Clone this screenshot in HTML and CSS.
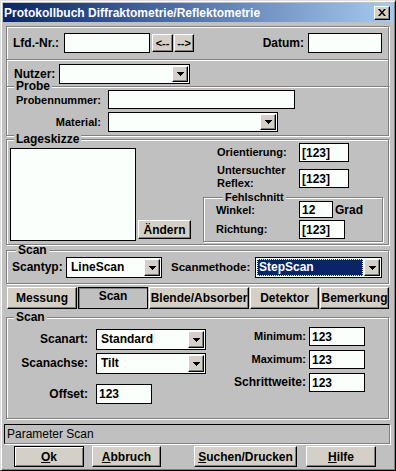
FILE: index.html
```html
<!DOCTYPE html>
<html lang="de">
<head>
    <meta charset="UTF-8">
    <meta name="viewport" content="width=device-width, initial-scale=1.0">
    <title>Protokollbuch Diffraktometrie/Reflektometrie</title>
    <link rel="stylesheet" href="styles.css">
</head>
<body>
    <div class="window">
        <div class="titlebar">
            <span class="title">Protokollbuch Diffraktometrie/Reflektometrie</span>
            <span class="close-btn">
                <svg width="8" height="7" viewBox="0 0 8 7"><path d="M0 0h2l2 2.4L6 0h2L5 3.5 8 7H6L4 4.6 2 7H0l3-3.5z"/></svg>
            </span>
        </div>

        <div class="client">
            <div class="box row-lfd">
                <span class="lbl lbl-lfd">Lfd.-Nr.:</span>
                <input type="text" class="edit w-lfd" readonly>
                <button class="btn nav">&lt;--</button>
                <button class="btn nav nav-next">--&gt;</button>
                <span class="fill"></span>
                <span class="lbl lbl-datum">Datum:</span>
                <input type="text" class="edit w-datum" readonly>
            </div>

            <div class="row-nutzer">
                <span class="lbl lbl-nutzer">Nutzer:</span>
                <div class="combo w-nutzer">
                    <span class="combo-text"></span>
                    <span class="drop"><svg width="7" height="4" viewBox="0 0 7 4"><path d="M0 0h7v1H0zM1 1h5v1H1zM2 2h3v1H2zM3 3h1v1H3z"/></svg></span>
                </div>
            </div>

            <fieldset class="group probe">
                <legend>Probe</legend>
                <div class="form-row">
                    <span class="lbl lbl-probe">Probennummer:</span>
                    <input type="text" class="edit w-probennr" readonly>
                </div>
                <div class="form-row">
                    <span class="lbl lbl-probe">Material:</span>
                    <div class="combo w-material">
                        <span class="combo-text"></span>
                        <span class="drop"><svg width="7" height="4" viewBox="0 0 7 4"><path d="M0 0h7v1H0zM1 1h5v1H1zM2 2h3v1H2zM3 3h1v1H3z"/></svg></span>
                    </div>
                </div>
            </fieldset>

            <fieldset class="group lage">
                <legend>Lageskizze</legend>
                <div class="lage-body">
                    <div class="sketch"></div>
                    <button class="btn btn-aendern">Ändern</button>
                    <div class="lage-right">
                        <div class="field-row">
                            <span class="lbl lbl-right">Orientierung:</span>
                            <input type="text" class="edit w-small" value="[123]" readonly>
                        </div>
                        <div class="field-row reflex-row">
                            <span class="lbl lbl-right lbl-two">Untersuchter<br>Reflex:</span>
                            <input type="text" class="edit w-small" value="[123]" readonly>
                        </div>
                        <fieldset class="group fehl">
                            <legend>Fehlschnitt</legend>
                            <div class="fehl-row">
                                <span class="lbl lbl-fehl">Winkel:</span>
                                <input type="text" class="edit w-winkel" value="12" readonly>
                                <span class="unit">Grad</span>
                            </div>
                            <div class="fehl-row richtung-row">
                                <span class="lbl lbl-fehl">Richtung:</span>
                                <input type="text" class="edit w-richtung" value="[123]" readonly>
                            </div>
                        </fieldset>
                    </div>
                </div>
            </fieldset>

            <fieldset class="group scan-top">
                <legend>Scan</legend>
                <div class="form-row">
                    <span class="lbl lbl-scantyp">Scantyp:</span>
                    <div class="combo w-scantyp">
                        <span class="combo-text">LineScan</span>
                        <span class="drop"><svg width="7" height="4" viewBox="0 0 7 4"><path d="M0 0h7v1H0zM1 1h5v1H1zM2 2h3v1H2zM3 3h1v1H3z"/></svg></span>
                    </div>
                    <span class="lbl lbl-methode">Scanmethode:</span>
                    <div class="combo w-methode">
                        <span class="combo-text selected">StepScan</span>
                        <span class="drop"><svg width="7" height="4" viewBox="0 0 7 4"><path d="M0 0h7v1H0zM1 1h5v1H1zM2 2h3v1H2zM3 3h1v1H3z"/></svg></span>
                    </div>
                </div>
            </fieldset>

            <div class="tabs">
                <button class="btn tab tab-messung">Messung</button>
                <button class="btn tab tab-scan active">Scan</button>
                <button class="btn tab tab-blende">Blende/Absorber</button>
                <button class="btn tab tab-detektor">Detektor</button>
                <button class="btn tab tab-bemerkung">Bemerkung</button>
            </div>

            <fieldset class="group scan-bottom">
                <legend>Scan</legend>
                <div class="scan-body">
                    <div class="scan-left">
                        <div class="form-row scanart-row">
                            <span class="lbl lbl-scan">Scanart:</span>
                            <div class="combo w-scanart">
                                <span class="combo-text">Standard</span>
                                <span class="drop"><svg width="7" height="4" viewBox="0 0 7 4"><path d="M0 0h7v1H0zM1 1h5v1H1zM2 2h3v1H2zM3 3h1v1H3z"/></svg></span>
                            </div>
                        </div>
                        <div class="form-row scanachse-row">
                            <span class="lbl lbl-scan">Scanachse:</span>
                            <div class="combo w-scanart">
                                <span class="combo-text">Tilt</span>
                                <span class="drop"><svg width="7" height="4" viewBox="0 0 7 4"><path d="M0 0h7v1H0zM1 1h5v1H1zM2 2h3v1H2zM3 3h1v1H3z"/></svg></span>
                            </div>
                        </div>
                        <div class="form-row offset-row">
                            <span class="lbl lbl-scan">Offset:</span>
                            <input type="text" class="edit w-num" value="123" readonly>
                        </div>
                    </div>
                    <div class="scan-right">
                        <div class="form-row">
                            <span class="lbl lbl-range">Minimum:</span>
                            <input type="text" class="edit w-num w-range" value="123" readonly>
                        </div>
                        <div class="form-row range-row">
                            <span class="lbl lbl-range">Maximum:</span>
                            <input type="text" class="edit w-num w-range" value="123" readonly>
                        </div>
                        <div class="form-row range-row">
                            <span class="lbl lbl-range lbl-wide">Schrittweite:</span>
                            <input type="text" class="edit w-num w-range" value="123" readonly>
                        </div>
                    </div>
                </div>
            </fieldset>

            <div class="status">Parameter Scan</div>

            <div class="actions">
                <button class="btn btn-default btn-ok"><u>O</u>k</button>
                <button class="btn btn-abbruch"><u>A</u>bbruch</button>
                <button class="btn btn-suchen"><u>S</u>uchen/Drucken</button>
                <button class="btn btn-hilfe"><u>H</u>ilfe</button>
            </div>
        </div>
    </div>
</body>
</html>
```

FILE: styles.css
```css
* {
    box-sizing: border-box;
}

body {
    margin: 0;
    background-color: #c0c0c0;
    color: #000;
    font-family: "Liberation Sans", Arial, sans-serif;
    font-size: 11px;
    font-weight: bold;
}

.window {
    width: 396px;
    height: 471px;
    padding: 2px;
    border: 1px solid;
    border-color: #dfdfdf #000 #000 #dfdfdf;
    box-shadow: inset 1px 1px #fff, inset -1px -1px #808080;
    background-color: #c0c0c0;
}

/* title bar */
.titlebar {
    display: flex;
    align-items: center;
    justify-content: space-between;
    height: 19px;
    padding: 0 3px 0 1px;
    background: linear-gradient(to right, #0a246a, #a6caf0);
    color: #fff;
    font-size: 12px;
}

.close-btn {
    display: flex;
    align-items: center;
    justify-content: center;
    width: 16px;
    height: 14px;
    background-color: #d4d0c8;
    border: 1px solid;
    border-color: #fff #000 #000 #fff;
    box-shadow: inset -1px -1px #808080;
}

.client {
    padding: 4px 4px 0 3px;
}

/* common controls */
.lbl {
    flex-shrink: 0;
    line-height: 20px;
    white-space: nowrap;
}

.edit {
    flex-shrink: 0;
    height: 20px;
    padding: 0 2px;
    border: 1px solid #000;
    background-color: #fbfffb;
    color: #000;
    font: inherit;
    font-size: 12px;
    outline: none;
}

.btn {
    flex-shrink: 0;
    padding: 0;
    background-color: #d4d0c8;
    border: 1px solid;
    border-color: #fff #000 #000 #fff;
    box-shadow: inset -1px -1px #808080;
    color: #000;
    font: inherit;
}

.combo {
    display: flex;
    flex-shrink: 0;
    height: 21px;
    padding: 1px;
    border: 1px solid #000;
    background-color: #fbfffb;
    font-size: 12px;
}

.combo-text {
    flex: 1;
    padding-left: 3px;
    line-height: 17px;
    white-space: nowrap;
}

.combo-text.selected {
    margin-right: 1px;
    padding-left: 2px;
    background-color: #0a246a;
    color: #fff;
    outline: 1px dotted #ffff80;
    outline-offset: -1px;
}

.drop {
    display: flex;
    align-items: center;
    justify-content: center;
    width: 16px;
    background-color: #d4d0c8;
    border: 1px solid;
    border-color: #fff #000 #000 #fff;
    box-shadow: inset -1px -1px #808080;
}

.form-row {
    display: flex;
}

/* etched frames */
.box {
    border: 1px solid #808080;
    box-shadow: inset 1px 1px #fff, 1px 1px #fff;
}

.group {
    min-width: 0;
    margin: 0;
    padding: 0;
    border: 1px solid #808080;
    box-shadow: inset 1px 1px #fff, 1px 1px #fff;
}

.group legend {
    margin-left: 4px;
    padding: 0 2px;
    line-height: 8px;
    font-size: 12px;
    background-color: #c0c0c0;
}

/* Lfd.-Nr. row */
.row-lfd {
    display: flex;
    align-items: center;
    height: 34px;
    padding: 0 6px;
}

.lbl-lfd {
    width: 51px;
    font-size: 12px;
}

.w-lfd {
    width: 86px;
}

.nav {
    width: 21px;
    height: 18px;
    margin-left: 2px;
}

.nav-next {
    width: 20px;
    margin-left: 1px;
}

.fill {
    flex: 1;
}

.lbl-datum {
    font-size: 12px;
}

.w-datum {
    width: 74px;
    margin-left: 4px;
}

/* Nutzer */
.row-nutzer {
    display: flex;
    align-items: flex-start;
    height: 26px;
    padding: 4px 0 0 7px;
    border-left: 1px solid #808080;
    border-right: 1px solid #808080;
    box-shadow: inset 1px 0 #fff, 1px 0 #fff;
}

.lbl-nutzer {
    width: 45px;
    font-size: 12px;
}

.w-nutzer {
    width: 131px;
    height: 20px;
}

/* Probe */
.probe {
    margin-top: -4px;
    padding: 0 0 3px 3px;
}

.probe .form-row + .form-row {
    margin-top: 2px;
}

.lbl-probe {
    width: 91px;
    margin-right: 7px;
    text-align: right;
}

.w-probennr {
    width: 187px;
    height: 19px;
}

.w-material {
    width: 170px;
    height: 20px;
}

/* Lageskizze */
.lage {
    margin-top: -1px;
    padding: 0 0 2px 3px;
}

.lage-body {
    display: flex;
    align-items: flex-start;
}

.sketch {
    flex-shrink: 0;
    width: 126px;
    height: 93px;
    margin-top: 5px;
    border: 1px solid #000;
    background-color: #fbfffb;
}

.btn-aendern {
    align-self: flex-end;
    width: 53px;
    height: 19px;
    margin: 0 0 3px 2px;
    font-size: 12px;
}

.lage-right {
    flex-shrink: 0;
    width: 180px;
    margin-left: 12px;
}

.field-row {
    display: flex;
    padding-left: 14px;
}

.lbl-right {
    width: 82px;
    line-height: 19px;
}

.w-small {
    width: 50px;
    height: 19px;
}

.reflex-row {
    margin-top: 2px;
}

.reflex-row .edit {
    margin-top: 5px;
}

.lbl-two {
    line-height: 13px;
}

.fehl {
    margin-top: 3px;
    padding: 0 0 2px 12px;
}

.fehl legend {
    margin-left: 7px;
    font-size: 11px;
}

.fehl-row {
    display: flex;
}

.richtung-row {
    margin-top: 1px;
}

.lbl-fehl {
    width: 83px;
    line-height: 18px;
}

.w-winkel {
    width: 34px;
    height: 17px;
}

.unit {
    margin-left: 2px;
    line-height: 18px;
    font-size: 12px;
}

.w-richtung {
    width: 46px;
    height: 19px;
}

/* Scan (top) */
.scan-top {
    margin-top: 1px;
    padding: 3px 0 5px 5px;
}

.lbl-scantyp {
    width: 54px;
    font-size: 12px;
}

.w-scantyp {
    width: 96px;
}

.lbl-methode {
    width: 84px;
    margin-left: 9px;
    font-size: 11.5px;
}

.w-methode {
    width: 127px;
}

/* tabs */
.tabs {
    display: flex;
    gap: 1px;
    margin: 3px 0 0 1px;
}

.tab {
    width: 70px;
    height: 22px;
    font-size: 12px;
}

.tab-blende {
    width: 100px;
}

.tab-detektor,
.tab-bemerkung {
    width: 69px;
}

.tab.active {
    padding-bottom: 4px;
    background-color: #c0c0c0;
    border-color: #000;
    box-shadow: inset 1px 1px #808080;
}

/* Scan (bottom) */
.scan-bottom {
    margin-top: 4px;
    padding: 0 0 14px 3px;
}

.scan-body {
    display: flex;
    align-items: flex-start;
}

.scan-left,
.scan-right {
    flex-shrink: 0;
}

.lbl-scan {
    width: 78px;
    margin-right: 8px;
    text-align: right;
    font-size: 12px;
}

.scanart-row {
    margin-top: 8px;
}

.scanachse-row {
    margin-top: 3px;
}

.offset-row {
    margin-top: 10px;
}

.w-scanart {
    width: 110px;
}

.w-num {
    width: 56px;
}

.scan-right {
    margin: 6px 0 0 10px;
}

.range-row {
    margin-top: 4px;
}

.lbl-range {
    width: 90px;
    margin-right: 3px;
    line-height: 19px;
    text-align: right;
}

.lbl-wide {
    font-size: 12px;
}

.w-range {
    height: 19px;
}

/* status + buttons */
.status {
    width: 386px;
    height: 20px;
    margin: 5px 0 0 -2px;
    padding-left: 2px;
    border: 1px solid;
    border-color: #000 #808080 #808080 #000;
    box-shadow: 1px 1px #fff;
    font-size: 12px;
    font-weight: normal;
    line-height: 18px;
}

.actions {
    display: flex;
    margin-top: 2px;
    padding-left: 8px;
}

.actions .btn {
    height: 21px;
    font-size: 12px;
}

.btn-default {
    border-color: #000;
    box-shadow: inset 1px 1px #fff, inset -1px -1px #808080;
}

.btn-ok {
    width: 70px;
}

.btn-abbruch {
    width: 69px;
    margin-left: 8px;
}

.btn-suchen {
    width: 103px;
    margin-left: 33px;
}

.btn-hilfe {
    width: 70px;
    margin-left: 9px;
}
```
